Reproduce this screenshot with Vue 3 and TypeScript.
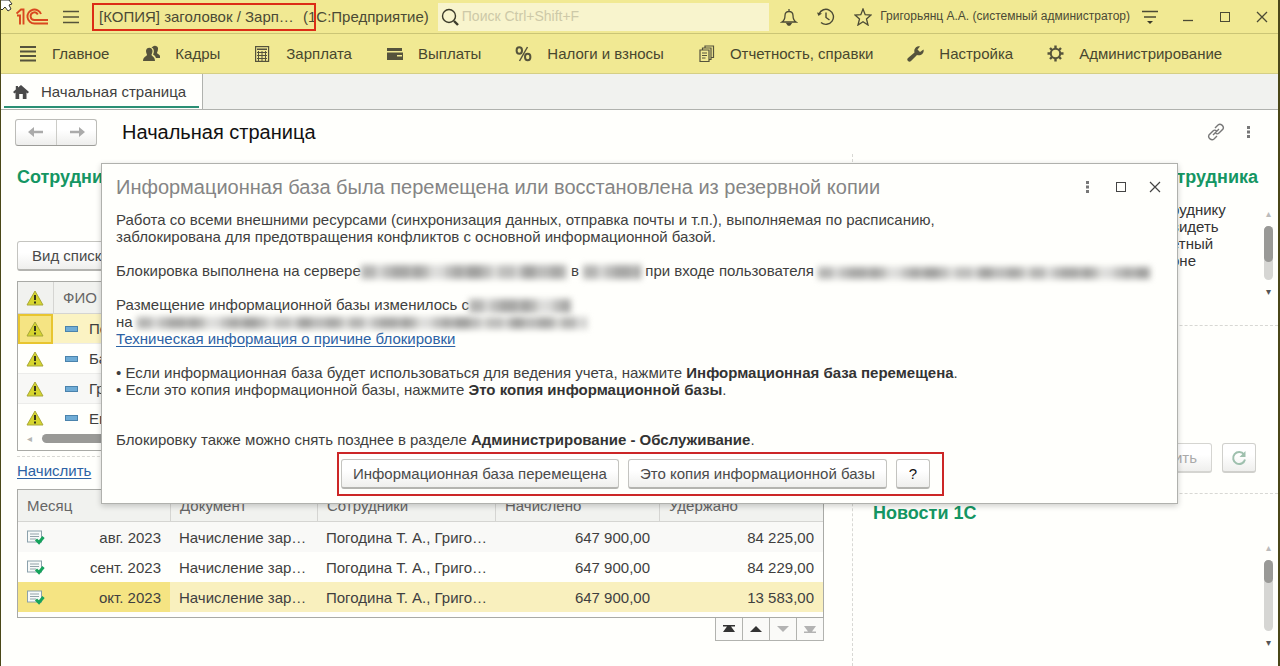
<script setup lang="ts">
import { ref } from 'vue'

interface Section { id: string; label: string }
interface Accrual { month: string; doc: string; staff: string; accrued: string; withheld: string }

const sections: Section[] = [
  { id: 'main', label: 'Главное' },
  { id: 'people', label: 'Кадры' },
  { id: 'calc', label: 'Зарплата' },
  { id: 'wallet', label: 'Выплаты' },
  { id: 'percent', label: 'Налоги и взносы' },
  { id: 'reports', label: 'Отчетность, справки' },
  { id: 'wrench', label: 'Настройка' },
  { id: 'gear', label: 'Администрирование' },
]

const employees: string[] = ['По', 'Ба', 'Гр', 'Ем']
const selectedEmployee = ref(0)

const accruals: Accrual[] = [
  { month: 'авг. 2023', doc: 'Начисление зар…', staff: 'Погодина Т. А., Григо…', accrued: '647 900,00', withheld: '84 225,00' },
  { month: 'сент. 2023', doc: 'Начисление зар…', staff: 'Погодина Т. А., Григо…', accrued: '647 900,00', withheld: '84 229,00' },
  { month: 'окт. 2023', doc: 'Начисление зар…', staff: 'Погодина Т. А., Григо…', accrued: '647 900,00', withheld: '13 583,00' },
]
const selectedAccrual = ref(2)
const search = ref('')
</script>

<template>
  <div class="app">
    <header class="titlebar">
      <svg class="logo" viewBox="0 0 33 18" aria-label="1С">
        <g fill="none" stroke="#d9471f" stroke-width="1.900">
          <path d="M.5 5.500L5 1.500H7.500V16.500M1 7.500H4V16.500" />
          <path d="M25 6A7 7 0 1 0 18.500 15.500H32" />
          <path d="M21.800 6.500A3.800 3.800 0 1 0 18.500 12H32" />
        </g>
      </svg>
      <button class="icon-btn menu" aria-label="Меню">
        <svg width="16" height="14" viewBox="0 0 16 14"><path d="M0 1.500H16M0 7H16M0 12.500H16" stroke="#55533a" stroke-width="1.300" /></svg>
      </button>
      <div class="caption"><span class="marked">[КОПИЯ] заголовок / Зарп…</span><span>(1С:Предприятие)</span></div>
      <label class="search">
        <svg width="18" height="18" viewBox="0 0 18 18" fill="none" stroke="#3b3a2a"><circle cx="8" cy="8" r="6.500" stroke-width="1.400" /><path d="M13 13L17 17" stroke-width="2.400" /></svg>
        <input v-model="search" type="text" placeholder="Поиск Ctrl+Shift+F" aria-label="Поиск">
      </label>
      <div class="tools">
        <button class="icon-btn" aria-label="Уведомления">
          <svg width="18" height="18" viewBox="0 0 18 18" fill="none" stroke="#4b4a35" stroke-width="1.300"><path d="M2 14H16C13 12 13 10 13 7.500C13 5 11.500 3.500 9 3.500S5 5 5 7.500C5 10 5 12 2 14ZM9 3.500V1" /><path d="M7 15.500H11L9.800 17H8.200Z" fill="#4b4a35" /></svg>
        </button>
        <button class="icon-btn" aria-label="История">
          <svg width="20" height="18" viewBox="0 0 20 18" fill="none" stroke="#4b4a35" stroke-width="1.400"><path d="M3 6A7.500 7.500 0 1 1 5 14.500" /><path d="M10 4.500V9.500L13.500 12" /><path d="M1 4.500L2.500 8L6 5.500Z" fill="#4b4a35" stroke="none" /></svg>
        </button>
        <button class="icon-btn" aria-label="Избранное">
          <svg width="18" height="18" viewBox="0 0 18 18"><path d="M9 1L11.200 6.700L17 7.100L12.500 11L14 17L9 13.700L4 17L5.500 11L1 7.100L6.800 6.700Z" fill="none" stroke="#4b4a35" stroke-width="1.300" /></svg>
        </button>
        <span class="user">Григорьянц А.А. (системный администратор)</span>
        <button class="icon-btn" aria-label="Сервис">
          <svg width="16" height="16" viewBox="0 0 16 16"><path d="M0 2.500H16M2 8H14" stroke="#4b4a35" stroke-width="1.400" /><path d="M5 12H11L8 15Z" fill="#3b3a2a" /></svg>
        </button>
      </div>
      <div class="window-btns">
        <button class="icon-btn" aria-label="Свернуть"><svg width="12" height="12" viewBox="0 0 12 12"><path d="M1 9.500H11" stroke="#4b4a35" stroke-width="1.300" /></svg></button>
        <button class="icon-btn" aria-label="Развернуть"><svg width="12" height="12" viewBox="0 0 12 12"><rect x="1.500" y="1.500" width="9" height="9" fill="none" stroke="#4b4a35" /></svg></button>
        <button class="icon-btn" aria-label="Закрыть"><svg width="12" height="12" viewBox="0 0 12 12"><path d="M1 1L11 11M11 1L1 11" stroke="#4b4a35" stroke-width="1.300" /></svg></button>
      </div>
    </header>

    <nav class="sections">
      <a v-for="s in sections" :key="s.id" href="#">
        <svg width="17" height="17" viewBox="0 0 17 17" fill="#55533c" aria-hidden="true">
          <path v-if="s.id === 'main'" d="M0 1H16V3H0ZM0 5.500H16V7.500H0ZM0 10H16V12H0ZM0 14.500H16V16.500H0Z" />
          <g v-else-if="s.id === 'people'">
            <path d="M10 1.500C11 0 15.500 .5 15 4C15 6 14 7 14 8C14 9 17.500 9 17.500 13H13C12.500 11 11 10 10 9.500C11.500 7 11 3 8.500 2.500Z" />
            <path d="M3 6C3 1.500 9.500 1.500 9.500 6C9.500 8 8.500 9 8.500 10C8.500 11 12 11.500 12 16H0C0 11.500 4 11 4 10C4 9 3 8 3 6Z" />
          </g>
          <g v-else-if="s.id === 'calc'">
            <rect x="1.600" y="1.600" width="13" height="14.800" fill="none" stroke="#55533c" stroke-width="1.200" />
            <path d="M3 3.500H13V5H3Z" />
            <path d="M3 7.500H13M3 10.500H13M3 13.500H13M4.500 6V16M8 6V16M11.500 6V16" stroke="#55533c" stroke-width="1" />
          </g>
          <g v-else-if="s.id === 'wallet'">
            <path d="M1 3H16V6H1ZM1 7.500H17V15H1Z" /><path d="M11 10H16V11.500H11Z" fill="#f1e993" />
          </g>
          <g v-else-if="s.id === 'percent'" fill="none" stroke="#55533c" stroke-width="2">
            <ellipse cx="4.300" cy="5.500" rx="2.700" ry="3.200" /><ellipse cx="12.700" cy="12" rx="2.700" ry="3.200" /><path d="M12.500 2L4.500 16" stroke-width="1.500" />
          </g>
          <g v-else-if="s.id === 'reports'" fill="none" stroke="#55533c" stroke-width="1.200">
            <path d="M2 5H11V16.500H2ZM4.500 5V3H13V14.500H11M7 3V1H15.500V12.500H13" /><path d="M4 8H9M4 10.500H9M4 13H7.500" />
          </g>
          <path v-else-if="s.id === 'wrench'" d="M1 16C0 15 0 14 1 13L7.500 7.500C6.500 4 9.500 .5 13 1.500L10.500 4.500L13 7L16.500 4.500C17.500 8 14 11.500 10 10L4 16C3 17 2 17 1 16Z" />
          <g v-else>
            <g stroke="#55533c" stroke-width="2.400"><path d="M8.500 .5V4M8.500 13V16.500M.5 8.500H4M13 8.500H16.500M3 3L5.500 5.500M11.500 11.500L14 14M14 3L11.500 5.500M5.500 11.500L3 14" /></g>
            <circle cx="8.500" cy="8.500" r="4.700" fill="#f1e993" stroke="#55533c" stroke-width="2" />
          </g>
        </svg>
        <span>{{ s.label }}</span>
      </a>
    </nav>

    <div class="tabs">
      <a class="tab" href="#">
        <svg width="16" height="14" viewBox="0 0 16 14" aria-hidden="true"><path d="M8 0L16 7L14.500 8.500L13.500 7.600V14H9.800V9H6.200V14H2.500V7.600L1.500 8.500L0 7L2.800 4.500V1H5V2.600Z" fill="#4a4a4a" /></svg>
        <span>Начальная страница</span>
      </a>
    </div>

    <main class="page">
      <div class="page-head">
        <div class="history">
          <button aria-label="Назад"><svg width="16" height="10" viewBox="0 0 16 10"><path d="M0 5L6 0V3.800H15V6.200H6V10Z" fill="#aaa" /></svg></button>
          <button aria-label="Вперед"><svg width="16" height="10" viewBox="0 0 16 10"><path d="M16 5L10 0V3.800H1V6.200H10V10Z" fill="#aaa" /></svg></button>
        </div>
        <h1>Начальная страница</h1>
        <button class="icon-btn" aria-label="Ссылка">
          <svg width="18" height="18" viewBox="0 0 18 18" fill="none" stroke="#777" stroke-width="1.400"><path d="M8 5L11 2C13.500 0 17.500 3 16 6L12 10C11 11 9.500 11 8.500 10" /><path d="M10 13L7 16C4.500 18 .5 15 2 12L6 8C7 7 8.500 7 9.500 8M6 12L12 6" /></svg>
        </button>
        <button class="icon-btn" aria-label="Ещё"><svg width="4" height="14" viewBox="0 0 4 14" fill="#777"><rect y="1" width="3" height="3" /><rect y="5.500" width="3" height="3" /><rect y="10" width="3" height="3" /></svg></button>
      </div>

      <div class="columns">
        <div class="left">
          <section class="staff">
            <h2>Сотрудники</h2>
            <button class="btn view">Вид списка</button>
            <div class="staff-list">
              <table>
                <colgroup><col class="c-mark"><col></colgroup>
                <thead>
                  <tr>
                    <th><svg class="warn" viewBox="0 0 18 16"><path d="M9 1L17 15H1Z" fill="#d6d52f" stroke="#a9a83a" /><path d="M9 5V10M9 11.500V13.500" stroke="#33331a" stroke-width="2" /></svg></th>
                    <th>ФИО</th>
                  </tr>
                </thead>
                <tbody>
                  <tr v-for="(e, i) in employees" :key="e" :class="{ active: i === selectedEmployee }" @click="selectedEmployee = i">
                    <td><svg class="warn" viewBox="0 0 18 16"><path d="M9 1L17 15H1Z" fill="#d6d52f" stroke="#a9a83a" /><path d="M9 5V10M9 11.500V13.500" stroke="#33331a" stroke-width="2" /></svg></td>
                    <td><span class="person"><i class="dash"></i>{{ e }}</span></td>
                  </tr>
                </tbody>
              </table>
              <div class="hscroll"><span class="arrow">◂</span><span class="bar"></span></div>
            </div>
          </section>

          <section class="accruals">
            <a class="link" href="#">Начислить</a>
            <div class="accrual-list">
              <table>
                <colgroup><col class="c1"><col class="c2"><col class="c3"><col class="c4"><col></colgroup>
                <thead><tr><th>Месяц</th><th>Документ</th><th>Сотрудники</th><th>Начислено</th><th>Удержано</th></tr></thead>
                <tbody>
                  <tr v-for="(a, i) in accruals" :key="a.month" :class="{ active: i === selectedAccrual }" @click="selectedAccrual = i">
                    <td>
                      <span class="month">
                        <svg width="18" height="15" viewBox="0 0 18 15" aria-hidden="true"><rect x=".5" y="1" width="14" height="11" fill="#f7faf9" stroke="#8ba1ab" /><path d="M3 4H12M3 6.500H12M3 9H9" stroke="#93a3aa" /><path d="M9 9.500L12 12.500L16.500 7" fill="none" stroke="#16a35c" stroke-width="3" /></svg>
                        {{ a.month }}
                      </span>
                    </td>
                    <td>{{ a.doc }}</td><td>{{ a.staff }}</td><td class="num">{{ a.accrued }}</td><td class="num">{{ a.withheld }}</td>
                  </tr>
                </tbody>
              </table>
            </div>
            <div class="pager">
              <button aria-label="В начало"><svg width="12" height="8" viewBox="0 0 12 8"><path d="M0 0H12V1.500H8L12 7H0L4 1.500H0Z" fill="#333" /></svg></button>
              <button aria-label="Вверх"><svg width="12" height="8" viewBox="0 0 12 8"><path d="M6 1L12 7H0Z" fill="#333" /></svg></button>
              <button aria-label="Вниз" disabled><svg width="12" height="8" viewBox="0 0 12 8"><path d="M6 7L12 1H0Z" fill="#b3b3b3" /></svg></button>
              <button aria-label="В конец" disabled><svg width="12" height="8" viewBox="0 0 12 8"><path d="M0 8H12V6.500H8L12 1H0L4 6.500H0Z" fill="#b3b3b3" /></svg></button>
            </div>
          </section>
        </div>

        <div class="right">
          <section class="card">
            <h2>сотрудника</h2>
            <div class="hint">
              <p>руднику<br>видеть<br>етный<br>оне</p>
              <div class="vscroll"><span class="up">▴</span><span class="track"><i class="thumb"></i></span><span>▾</span></div>
            </div>
          </section>
          <section class="save">
            <button class="btn" disabled>Сохранить</button>
            <button class="btn square refresh" aria-label="Обновить"><svg width="16" height="16" viewBox="0 0 16 16"><path d="M13 4.500A6 6 0 1 0 14 9.500" fill="none" stroke="#9fc0ae" stroke-width="2" /><path d="M14.500 1V7H8.500Z" fill="#9fc0ae" /></svg></button>
          </section>
          <section class="news">
            <h2>Новости 1С</h2>
            <div class="vscroll"><span class="up">▴</span><span class="track"><i class="thumb"></i></span><span>▾</span></div>
          </section>
        </div>
      </div>
    </main>

    <div class="dialog" role="dialog" aria-labelledby="dlg-title">
      <div class="dlg-head">
        <h2 id="dlg-title">Информационная база была перемещена или восстановлена из резервной копии</h2>
        <button class="icon-btn" aria-label="Ещё"><svg width="10" height="14" viewBox="0 0 10 14" fill="#777"><rect x="3" y="1" width="3" height="3" /><rect x="3" y="5.500" width="3" height="3" /><rect x="3" y="10" width="3" height="3" /></svg></button>
        <button class="icon-btn" aria-label="Развернуть"><svg width="12" height="12" viewBox="0 0 12 12"><rect x="1.500" y="1.500" width="9" height="9" fill="none" stroke="#444" /></svg></button>
        <button class="icon-btn" aria-label="Закрыть"><svg width="12" height="12" viewBox="0 0 12 12"><path d="M1 1L11 11M11 1L1 11" stroke="#444" stroke-width="1.200" /></svg></button>
      </div>
      <div class="dlg-body">
        <p>Работа со всеми внешними ресурсами (синхронизация данных, отправка почты и т.п.), выполняемая по расписанию,<br>заблокирована для предотвращения конфликтов с основной информационной базой.</p>
        <p>Блокировка выполнена на сервере<span class="blur w-server"></span> в <span class="blur w-time"></span> при входе пользователя <span class="blur w-user"></span></p>
        <p>Размещение информационной базы изменилось с<span class="blur w-from"></span><br>на <span class="blur w-path"></span><br><a class="link" href="#">Техническая информация о причине блокировки</a></p>
        <p>• Если информационная база будет использоваться для ведения учета, нажмите <b>Информационная база перемещена</b>.<br>• Если это копия информационной базы, нажмите <b>Это копия информационной базы</b>.</p>
        <p class="later">Блокировку также можно снять позднее в разделе <b>Администрирование - Обслуживание</b>.</p>
      </div>
      <div class="dlg-actions">
        <div class="marked-actions">
          <button class="btn">Информационная база перемещена</button>
          <button class="btn">Это копия информационной базы</button>
          <button class="btn square help" aria-label="Справка">?</button>
        </div>
      </div>
    </div>

    <svg class="cursor" width="14" height="13" viewBox="0 0 14 13" aria-hidden="true"><path d="M0 0H9L12 4L9 5L11 9L8 11L5 7L2 10L0 8Z" fill="#fff" stroke="#333" /></svg>
  </div>
</template>

<style>
html, body { background: #fffffc; }
</style>

<style scoped>
* { box-sizing: border-box; }
.app {
  position: relative;
  display: flex;
  flex-direction: column;
  min-height: 100vh;
  overflow: hidden;
  border-left: 1px solid #4a4718;
  border-right: 2px solid #4a4718;
  background: #fffffc;
  color: #3f3f3f;
  font: 15px/17px "Liberation Sans", Arial, sans-serif;
}
button, input { font: inherit; color: inherit; }
h1, h2, p { margin: 0; font-weight: normal; }
a { color: inherit; text-decoration: none; }
svg { display: block; flex: none; }
.icon-btn { display: flex; padding: 0; border: 0; background: none; }

.titlebar {
  display: flex;
  align-items: center;
  height: 34px;
  padding: 0 10px 0 15px;
  border-bottom: 1px solid #cbc576;
  background: #f1e993;
  color: #4b4a35;
}
.logo { width: 33px; height: 18px; }
.menu { margin-left: 14px; }
.caption { display: flex; margin-left: 13px; white-space: nowrap; }
.caption span { padding: 4px 0; }
.caption .marked {
  position: relative;
  width: 211px;
  padding-left: 7px;
}
.marked::after {
  content: "";
  position: absolute;
  left: 0;
  right: -13px;
  top: -1px;
  bottom: -2px;
  border: 2px solid #dc2d16;
}
.search {
  display: flex;
  flex: 1;
  align-items: center;
  gap: 3px;
  height: 28px;
  margin-left: 9px;
  padding-left: 3px;
  background: #f8f4cd;
}
.search input { flex: 1; min-width: 0; padding: 0; border: 0; outline: 0; background: none; font-size: 14px; }
.search input::placeholder { color: #cdc9a8; opacity: 1; }
.tools { display: flex; align-items: center; gap: 18px; margin-left: 11px; }
.user { margin: 0 -6px 0 -10px; font-size: 12px; white-space: nowrap; }
.window-btns { display: flex; gap: 25px; margin-left: 24px; }

.sections {
  display: flex;
  align-items: center;
  gap: 34px;
  height: 40px;
  padding: 0 19px;
  border-bottom: 1px solid #d5cf85;
  background: #f1e993;
  color: #48472f;
  white-space: nowrap;
}
.sections a { display: flex; align-items: center; gap: 15px; }

.tabs { display: flex; height: 36px; border-bottom: 1px solid #b0b2ae; background: #f1f2ef; }
.tab {
  position: relative;
  display: flex;
  align-items: center;
  gap: 12px;
  padding: 0 16px 0 12px;
  border-right: 1px solid #b0b2ae;
  background: #fffffc;
}
.tab::after { content: ""; position: absolute; left: 3px; right: 3px; bottom: 1px; height: 2px; background: #2b8f74; }

.page { display: flex; flex: 1; flex-direction: column; }
.page-head { display: flex; align-items: center; gap: 22px; height: 44px; padding: 0 27px 0 14px; }
.page-head h1 { flex: 1; margin-left: 3px; color: #111; font-size: 20px; line-height: 24px; }
.history {
  display: flex;
  border: 1px solid #bcbcb8;
  border-bottom-color: #9c9c98;
  border-radius: 3px;
  background: linear-gradient(#fff 40%, #eeeeec);
}
.history button { display: flex; align-items: center; justify-content: center; width: 40px; height: 25px; padding: 0; border: 0; background: none; }
.history button + button { border-left: 1px solid #ccccc8; }

.columns { display: grid; flex: 1; grid-template-columns: minmax(0, 1fr) 425px; }
.left { border-right: 1px dashed #d8d8d4; padding: 12px 28px 0 16px; }
h2 { color: #149663; font-size: 18px; font-weight: bold; line-height: 22px; }

.btn {
  height: 30px;
  padding: 0 14px;
  border: 1px solid #c4c4c0;
  border-bottom: 2px solid #b4b4b0;
  border-radius: 3px;
  background: linear-gradient(#fff 40%, #efefed);
  color: #4a4a4a;
  white-space: nowrap;
}
.btn:disabled { border-color: #d5d5d1; color: #aaa; }
.btn.refresh { border-color: #d0d0cc; }
.btn.square { display: flex; align-items: center; justify-content: center; width: 34px; padding: 0; }
.btn.help { color: #111; }

table { width: 100%; border-collapse: separate; border-spacing: 0; table-layout: fixed; }
th { font-weight: normal; text-align: left; color: #666; background: #f1f2ef; border-bottom: 1px solid #d5d5d2; }
th, td { overflow: hidden; height: 30px; padding: 0 9px; white-space: nowrap; }
th { height: 32px; }
th + th { border-left: 1px solid #d5d5d2; }

.view { margin-top: 53px; }
.staff-list { margin-top: 10px; border: 1px solid #a9aaa6; }
.c-mark { width: 35px; }
.staff-list td { border-bottom: 1px solid #ececea; background: #fffffc; }
.staff-list tr:last-child td { height: 28px; border-bottom: 0; }
.staff-list tr:nth-child(3) td { background: #f8f8f6; }
.staff-list tr.active td { background: #fbf3c3; }
.staff-list tr.active td:first-child { border: 2px solid #e8c52f; background: #f5e483; }
.staff-list th:first-child, .staff-list td:first-child { padding: 0 0 0 8px; }
.staff-list tr.active td:first-child { padding-left: 6px; }
.warn { width: 18px; height: 16px; }
.person { display: flex; align-items: center; gap: 11px; padding-left: 3px; }
.dash { width: 13px; height: 6px; border: 1px solid #4b83ac; background: #6facd6; }
.hscroll { display: flex; align-items: flex-start; gap: 10px; height: 18px; padding: 2px 9px 0; color: #b5b5b2; font-size: 10px; line-height: 9px; }
.bar { flex: 1; height: 9px; border-radius: 5px; background: #999996; }

.accruals { margin-top: 5px; padding-top: 5px; border-top: 1px dashed #d8d8d4; }
.link { color: #2c62a5; text-decoration: underline; text-underline-offset: 2px; }
.accruals > .link { display: block; width: max-content; }
.accrual-list { margin-top: 10px; padding-bottom: 5px; border: 1px solid #a9aaa6; }
.c1 { width: 152px; }
.c2 { width: 147px; }
.c3 { width: 178px; }
.c4 { width: 164px; }
.accruals tbody tr:first-child td { background: #f9f9f7; }
.accruals tbody tr.active td { background: #f9f0be; }
.accruals tbody tr.active td:first-child { background: #f5e483; }
.num { text-align: right; }
.month { display: flex; align-items: center; justify-content: space-between; }
.pager { display: flex; justify-content: flex-end; }
.pager button { display: flex; align-items: center; justify-content: center; width: 27px; height: 23px; padding: 0; border: 1px solid #b2b3af; border-top: 0; border-left: 0; background: #fafaf8; }
.pager button:first-child { width: 28px; border-left: 1px solid #b2b3af; }

.right { display: flex; flex-direction: column; }
.card { height: 172px; padding: 12px 4px 0 20px; border-bottom: 1px dashed #d8d8d4; }
.card h2 { margin-right: 16px; text-align: right; }
.hint { display: flex; justify-content: flex-end; gap: 32px; margin-top: 13px; }
.hint p { width: 60px; color: #333; }
.vscroll { display: flex; flex-direction: column; align-items: center; gap: 7px; width: 10px; margin-right: 1px; color: #555; font-size: 10px; line-height: 10px; }
.hint .vscroll { margin-top: 8px; }
.vscroll .up { color: #bbb; }
.track { display: flex; width: 9px; height: 54px; border-radius: 5px; background: #d6d6d3; }
.thumb { width: 9px; height: 36px; border-radius: 5px; background: #999996; }
.save { display: flex; align-items: flex-end; justify-content: flex-end; gap: 10px; height: 168px; padding: 0 22px 20px; border-bottom: 1px dashed #d8d8d4; }
.news { padding: 8px 4px 0 20px; }
.news .vscroll { margin: 19px 1px 0 auto; }
.news .track { height: 71px; }
.news .thumb { height: 23px; }

.dialog {
  position: absolute;
  left: 100px;
  right: 100px;
  top: 163px;
  padding: 0 14px 7px;
  border: 1px solid #b0b1ad;
  background: #fffffc;
  box-shadow: 0 2px 6px rgba(0, 0, 0, .2);
}
.dlg-head { display: flex; align-items: center; gap: 22px; height: 46px; padding-right: 2px; }
.dlg-head h2 { flex: 1; color: #858585; font-size: 20px; font-weight: normal; line-height: 24px; }
.dlg-body { display: flex; flex-direction: column; gap: 17px; padding-top: 1px; white-space: nowrap; }
.dlg-body .later { margin-top: 16px; }
.dlg-body b { color: #333; }
.blur {
  display: inline-block;
  height: 14px;
  vertical-align: -3px;
  filter: blur(3px);
  background:
    repeating-linear-gradient(90deg, rgba(120, 120, 118, .4) 0 13px, transparent 17px 29px, rgba(120, 120, 118, .3) 33px 47px, transparent 50px 53px),
    repeating-linear-gradient(90deg, #dcdcda 0 19px, #bcbcba 24px 57px, #e0e0dd 62px 71px);
}
.w-server { width: 206px; }
.w-time { width: 58px; }
.w-user { width: 332px; height: 12px; }
.w-from { width: 102px; }
.w-path { width: 450px; height: 12px; vertical-align: -2px; }
.dlg-actions { display: flex; justify-content: center; margin-top: 4px; padding-left: 2px; }
.marked-actions { display: flex; gap: 9px; padding: 5px 12px 5px 2px; border: 2px solid #cc2626; }
.marked-actions .btn { padding: 0 11px; }

.cursor { position: absolute; left: -1px; top: 0; }
</style>
